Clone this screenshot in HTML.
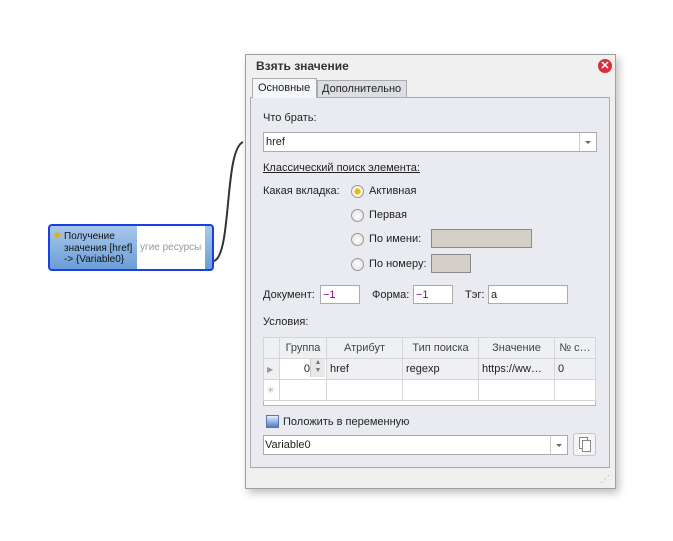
<!DOCTYPE html><html><head><meta charset="utf-8"><style>
*{box-sizing:border-box}body{margin:0;width:673px;height:541px;background:#fff;position:relative;font-family:"Liberation Sans",sans-serif;font-size:11px;color:#222;overflow:hidden}
.a{position:absolute}
.in{position:absolute;background:#fff;border:1px solid #a9abb0}
.gr{position:absolute;background:#d4d0c8;border:1px solid #8a8a8a}
.rad{position:absolute;width:13px;height:13px;border-radius:50%;border:1px solid #999;background:radial-gradient(#fff,#ddd)}
.t{position:absolute;white-space:nowrap}
.dd{position:absolute;right:0;top:0;bottom:0;width:17px;border-left:1px solid #ccc}
.dd:after{content:"";position:absolute;left:5px;top:8px;border:3px solid transparent;border-top:3px solid #666}
table{border-collapse:collapse;position:absolute;left:263px;top:337px;width:333px}
td{border:1px solid #d5d5d5;height:21px;padding:0 3px;white-space:nowrap;overflow:hidden}
</style></head><body>
<svg class="a" style="left:0;top:0" width="673" height="541"><path d="M214 261 C232 255 224 150 243 142" stroke="#333" stroke-width="2" fill="none"/></svg>
<div class="a" style="left:48px;top:224px;width:166px;height:47px;border:2px solid #1b3fe0;border-radius:4px;background:linear-gradient(#a8c8ec,#6a9ed8)"></div>
<div class="a" style="left:137px;top:226px;width:68px;height:43px;background:#fff"></div>
<div class="t" style="left:140px;top:242px;color:#999;font-size:10px">угие ресурсы</div>
<div class="t" style="left:52px;top:228px;color:#e0b000;font-size:12px">★</div>
<div class="t" style="left:64px;top:231px;font-size:10px;line-height:11.5px;color:#111">Получение<br>значения [href]<br>-&gt; {Variable0}</div>
<div class="a" style="left:245px;top:54px;width:371px;height:435px;background:#f0f0f0;border:1px solid #a0a0a0;box-shadow:3px 4px 8px rgba(0,0,0,.25)"></div>
<div class="t" style="left:256px;top:59px;font-weight:bold;font-size:12px;color:#333">Взять значение</div>
<div class="a" style="left:598px;top:59px;width:14px;height:14px;border-radius:50%;background:#d8303a;color:#fff;font-size:11px;font-weight:bold;text-align:center;line-height:14px">✕</div>
<div class="a" style="left:250px;top:97px;width:360px;height:371px;background:#e9ebf0;border:1px solid #a9abb0"></div>
<div class="a" style="left:317px;top:80px;width:90px;height:18px;background:#dcdee3;border:1px solid #a9abb0"></div>
<div class="t" style="left:322px;top:83px">Дополнительно</div>
<div class="a" style="left:252px;top:78px;width:65px;height:20px;background:#f5f6f8;border:1px solid #a9abb0;border-bottom:none"></div>
<div class="t" style="left:258px;top:82px">Основные</div>
<div class="t" style="left:263px;top:112px">Что брать:</div>
<div class="in" style="left:263px;top:132px;width:334px;height:20px"><span class="t" style="left:2px;top:3px">href</span><div class="dd"></div></div>
<div class="t" style="left:263px;top:162px;text-decoration:underline">Классический поиск элемента:</div>
<div class="t" style="left:263px;top:185px">Какая вкладка:</div>
<div class="rad" style="left:351px;top:185px;background:radial-gradient(#f5b800 35%,#fff 45%,#ddd)"></div><div class="t" style="left:369px;top:185px">Активная</div>
<div class="rad" style="left:351px;top:209px"></div><div class="t" style="left:369px;top:209px">Первая</div>
<div class="rad" style="left:351px;top:233px"></div><div class="t" style="left:369px;top:233px">По имени:</div>
<div class="gr" style="left:431px;top:229px;width:101px;height:19px"></div>
<div class="rad" style="left:351px;top:258px"></div><div class="t" style="left:369px;top:258px">По номеру:</div>
<div class="gr" style="left:431px;top:254px;width:40px;height:19px"></div>
<div class="t" style="left:263px;top:289px">Документ:</div>
<div class="in" style="left:320px;top:285px;width:40px;height:19px"><span class="t" style="left:2px;top:3px;color:#808">−1</span></div>
<div class="t" style="left:372px;top:289px">Форма:</div>
<div class="in" style="left:413px;top:285px;width:40px;height:19px"><span class="t" style="left:2px;top:3px;color:#808">−1</span></div>
<div class="t" style="left:465px;top:289px">Тэг:</div>
<div class="in" style="left:488px;top:285px;width:80px;height:19px"><span class="t" style="left:2px;top:3px">a</span></div>
<div class="t" style="left:263px;top:316px">Условия:</div>
<div class="a" style="left:263px;top:337px;width:333px;height:69px;background:#fff;border:1px solid #b5b5b5"></div>
<table>
<tr style="background:#eef0f3;color:#444;text-align:center"><td style="width:16px"></td><td style="width:47px">Группа</td><td style="width:76px">Атрибут</td><td style="width:76px">Тип поиска</td><td style="width:76px">Значение</td><td>№ с…</td></tr>
<tr style="background:#eef0f3"><td style="color:#999;font-size:8px">▶</td><td style="background:#fff;text-align:right;padding-right:16px">0</td><td>href</td><td>regexp</td><td>https://ww…</td><td>0</td></tr>
<tr style="background:#fff"><td style="color:#aaa;font-size:9px">✳</td><td></td><td></td><td></td><td></td><td></td></tr>
</table>
<div class="a" style="left:310px;top:359px;width:15px;height:18px;background:#e8e8e8;border-left:1px solid #ccc;color:#777;font-size:7px;line-height:8px;text-align:center">▲<br>▼</div>
<div class="a" style="left:266px;top:415px;width:13px;height:13px;border:1px solid #5577aa;background:linear-gradient(#e8f0ff,#4a7ec0)"></div>
<div class="t" style="left:283px;top:416px">Положить в переменную</div>
<div class="in" style="left:263px;top:435px;width:305px;height:20px"><span class="t" style="left:1px;top:3px">Variable0</span><div class="dd"></div></div>
<div class="a" style="left:573px;top:433px;width:23px;height:23px;border:1px solid #c4c4c4;border-radius:3px;background:#f4f4f4"><div class="a" style="left:5px;top:3px;width:9px;height:12px;border:1px solid #888;background:#fff"></div><div class="a" style="left:8px;top:6px;width:9px;height:12px;border:1px solid #888;background:#fff"></div></div>
<div class="t" style="left:600px;top:474px;color:#aaa;font-size:10px">⋰</div>
</body></html>
